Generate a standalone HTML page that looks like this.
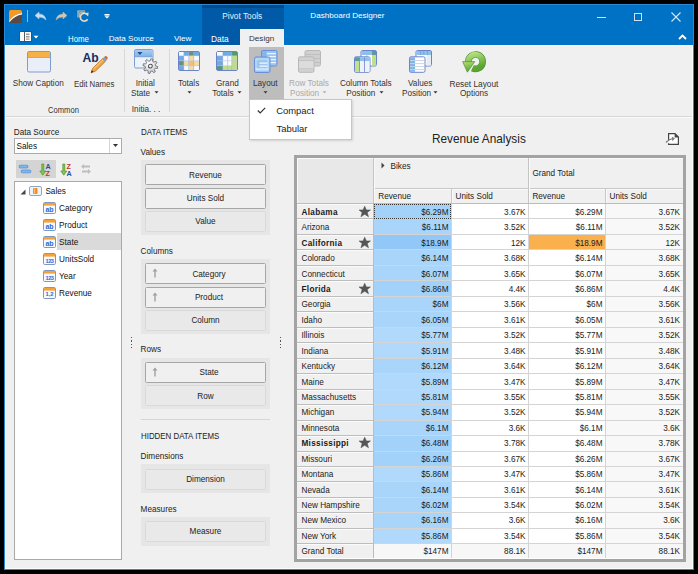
<!DOCTYPE html><html><head><meta charset="utf-8"><style>
html,body{margin:0;padding:0;width:698px;height:574px;overflow:hidden;background:#000;}
body{position:relative;font-family:"Liberation Sans",sans-serif;}
.t{position:absolute;white-space:nowrap;}
</style></head><body>
<div style="position:absolute;left:4px;top:4px;width:690px;height:566px;background:#0072c6;"></div>
<div style="position:absolute;left:4px;top:4px;width:690px;height:1px;background:#2a8ad8;"></div>
<div style="position:absolute;left:4px;top:4px;width:1px;height:566px;background:#2a8ad8;"></div>
<div style="position:absolute;left:693px;top:4px;width:1px;height:566px;background:#2a8ad8;"></div>
<div style="position:absolute;left:4px;top:569px;width:690px;height:1px;background:#2a8ad8;"></div>
<div style="position:absolute;left:202px;top:5px;width:82px;height:40px;background:#005aa8;"></div>
<div style="position:absolute;left:202px;top:5px;width:82px;height:3px;background:#004a8a;"></div>
<div style="position:absolute;left:5px;top:45px;width:688px;height:524px;background:#f0f0f0;"></div>
<div style="position:absolute;left:5px;top:45px;width:688px;height:1px;background:#fcfcfc;"></div>
<div style="position:absolute;left:5px;top:45px;width:1px;height:524px;background:#fcfcfc;"></div>
<div style="position:absolute;left:692px;top:45px;width:1px;height:524px;background:#fcfcfc;"></div>
<div style="position:absolute;left:5px;top:568px;width:688px;height:1px;background:#fcfcfc;"></div>
<div style="position:absolute;left:6px;top:116px;width:686px;height:1px;background:#d8d8d8;"></div>
<div style="position:absolute;left:6px;top:117px;width:686px;height:1px;background:#fafafa;"></div>
<div style="position:absolute;left:240px;top:29px;width:44px;height:17px;background:#f0f0f0;"></div>
<div class="t" style="top:10.12px;font-size:8.3px;line-height:12px;color:#e8f0f8;left:222.3px;">Pivot Tools</div>
<div class="t" style="top:10.19px;font-size:8.1px;line-height:12px;color:#ffffff;left:310.3px;">Dashboard Designer</div>
<div class="t" style="top:33.32px;font-size:8.3px;line-height:12px;color:#ffffff;left:67.7px;transform:scaleX(0.94);transform-origin:0 0;">Home</div>
<div class="t" style="top:33.39px;font-size:8.1px;line-height:12px;color:#ffffff;left:108.7px;">Data Source</div>
<div class="t" style="top:33.39px;font-size:8.1px;line-height:12px;color:#ffffff;left:174px;">View</div>
<div class="t" style="top:33.29px;font-size:8.4px;line-height:12px;color:#ffffff;left:211px;">Data</div>
<div class="t" style="top:33.39px;font-size:8.1px;line-height:12px;color:#333;left:249px;">Design</div>
<div class="t" style="top:78.36px;font-size:8.2px;line-height:12px;color:#333;left:12.8px;">Show Caption</div>
<div class="t" style="top:78.32px;font-size:8.3px;line-height:12px;color:#333;left:74.2px;transform:scaleX(0.94);transform-origin:0 0;">Edit Names</div>
<div class="t" style="top:104.32px;font-size:8.3px;line-height:12px;color:#333;left:47.9px;transform:scaleX(0.92);transform-origin:0 0;">Common</div>
<div class="t" style="top:78.36px;font-size:8.2px;line-height:12px;color:#333;left:135.7px;">Initial</div>
<div class="t" style="top:88.36px;font-size:8.2px;line-height:12px;color:#333;left:131px;">State</div>
<div class="t" style="top:104.36px;font-size:8.2px;line-height:12px;color:#333;left:131.8px;">Initia<span style="letter-spacing:2.2px">...</span></div>
<div class="t" style="top:78.36px;font-size:8.2px;line-height:12px;color:#333;left:177.9px;">Totals</div>
<div class="t" style="top:78.36px;font-size:8.2px;line-height:12px;color:#333;left:216px;">Grand</div>
<div class="t" style="top:88.36px;font-size:8.2px;line-height:12px;color:#333;left:212.2px;">Totals</div>
<div style="position:absolute;left:249px;top:47px;width:35px;height:53px;background:#bdbdbd;"></div>
<div class="t" style="top:78.36px;font-size:8.2px;line-height:12px;color:#333;left:253px;">Layout</div>
<div class="t" style="top:78.36px;font-size:8.2px;line-height:12px;color:#a8a8a8;left:289px;">Row Totals</div>
<div class="t" style="top:88.36px;font-size:8.2px;line-height:12px;color:#a8a8a8;left:290px;">Position</div>
<div class="t" style="top:78.36px;font-size:8.2px;line-height:12px;color:#333;left:339.9px;">Column Totals</div>
<div class="t" style="top:88.36px;font-size:8.2px;line-height:12px;color:#333;left:346.3px;">Position</div>
<div class="t" style="top:78.36px;font-size:8.2px;line-height:12px;color:#333;left:408px;">Values</div>
<div class="t" style="top:88.36px;font-size:8.2px;line-height:12px;color:#333;left:402px;">Position</div>
<div class="t" style="top:78.32px;font-size:8.3px;line-height:12px;color:#333;left:449.5px;">Reset Layout</div>
<div class="t" style="top:88.36px;font-size:8.2px;line-height:12px;color:#333;left:460px;">Options</div>
<div style="position:absolute;left:124px;top:49px;width:1px;height:63px;background:#d8d8d8;"></div>
<div style="position:absolute;left:169px;top:49px;width:1px;height:63px;background:#d8d8d8;"></div>
<svg style="position:absolute;left:9px;top:10px" width="13" height="13" viewBox="0 0 13 13"><defs><clipPath id="ac"><rect x="0" y="0" width="13" height="13" rx="2"/></clipPath></defs><g clip-path="url(#ac)"><rect width="13" height="13" fill="#5a4a44"/><path d="M0 0H13V3Q5 4 0 11Z" fill="#f39a22"/><path d="M0 11Q5 4 13 3V4.6Q6 5.5 0 12.6Z" fill="#fff"/></g></svg>
<div style="position:absolute;left:27px;top:10px;width:1px;height:12px;background:#8fbbe6;"></div>
<svg style="position:absolute;left:34px;top:11px" width="13" height="10" viewBox="0 0 13 10"><path d="M1 4.5L5 1V3Q11 3 12 9Q9.5 6 5 6V8Z" fill="#c8e0f6" stroke="#a9cdee" stroke-width="0.6"/></svg>
<svg style="position:absolute;left:55px;top:11px" width="13" height="10" viewBox="0 0 13 10"><path d="M12 4.5L8 1V3Q2 3 1 9Q3.5 6 8 6V8Z" fill="#d6c6ae" stroke="#bfae95" stroke-width="0.6"/></svg>
<svg style="position:absolute;left:76px;top:9px" width="15" height="14" viewBox="0 0 15 14"><path d="M2 8.5V2H9" fill="none" stroke="#e0ccb0" stroke-width="1.1"/><path d="M3.8 8.5V3.8H9" fill="none" stroke="#e0ccb0" stroke-width="1.1"/><path d="M11.6 10.2A3.9 3.9 0 1 1 10.8 5.2" fill="none" stroke="#ead8c0" stroke-width="1.7"/><path d="M8.6 4.2L12.6 3.4L12.2 7.6Z" fill="#ead8c0"/></svg>
<svg style="position:absolute;left:104px;top:13px" width="6" height="6" viewBox="0 0 6 6"><rect x="0.5" y="1" width="5" height="1.6" fill="#fff"/><path d="M0.5 3.2H5.5L3 5.6Z" fill="#fff"/></svg>
<svg style="position:absolute;left:19px;top:31px" width="21" height="11" viewBox="0 0 21 11"><rect x="0.5" y="0.5" width="12" height="10" rx="0.8" fill="#05325e" opacity="0.5"/><rect x="1" y="1" width="11" height="9" rx="0.5" fill="#fbfbfb"/><rect x="5" y="1" width="0.9" height="9" fill="#4a4a4a"/><rect x="7" y="2.5" width="3.5" height="1.5" fill="#9a9a9a"/><rect x="7" y="5" width="3.5" height="1.5" fill="#9a9a9a"/><rect x="7" y="7.5" width="3.5" height="1.2" fill="#9a9a9a"/><path d="M14.5 4.8H19.5L17 7.6Z" fill="#fff"/></svg>
<div style="position:absolute;left:597px;top:17px;width:9px;height:1px;background:#cfe2f4;"></div>
<div style="position:absolute;left:634px;top:13px;width:8px;height:8px;border:1px solid #cfe2f4;box-sizing:border-box;"></div>
<svg style="position:absolute;left:671px;top:12px" width="10" height="10" viewBox="0 0 10 10"><path d="M0.5 0.5L9.5 9.5M9.5 0.5L0.5 9.5" stroke="#d7e6f5" stroke-width="1.1"/></svg>
<svg style="position:absolute;left:678px;top:33px" width="9" height="7" viewBox="0 0 9 7"><path d="M1 6L4.5 2.5L8 6" fill="none" stroke="#fff" stroke-width="1.8"/></svg>
<svg style="position:absolute;left:27px;top:51px" width="24" height="22" viewBox="0 0 24 22"><rect x="0.5" y="0.5" width="23" height="20.5" rx="1.5" fill="#e9eef8" stroke="#7f9cd2"/><rect x="1" y="1" width="22" height="5" fill="#f5b048"/><rect x="1" y="6" width="22" height="1" fill="#e8a040"/></svg>
<svg style="position:absolute;left:82px;top:51px" width="26" height="23" viewBox="0 0 26 23"><text x="0.6" y="11.4" transform="scale(0.92,1)" font-family="Liberation Sans" font-weight="bold" font-size="13.2" fill="#1a2c5c">Ab</text><path d="M9 21.8L10.8 17.2L20.6 7.6L23.4 10.4L13.6 20Z" fill="#f4a53a" stroke="#b8621c" stroke-width="0.7"/><path d="M11.6 18L21 8.8" stroke="#fcd590" stroke-width="1"/><path d="M20.6 7.6L22 6.2L24.8 9L23.4 10.4Z" fill="#6aa8e0"/><path d="M22 6.2L23 5.2Q23.8 4.6 24.6 5.3L25.5 6.2Q26.1 7 25.4 7.7L24.8 9Z" fill="#d8683a"/><path d="M9 21.8L9.9 19.3L11.5 20.9Z" fill="#222"/></svg>
<svg style="position:absolute;left:133px;top:48px" width="28" height="28" viewBox="0 0 28 28"><rect x="1.5" y="1.5" width="18.5" height="18.5" rx="1.5" fill="#eef3fb" stroke="#7d9dd4"/><defs><linearGradient id="isg" x1="0" y1="0" x2="0" y2="1"><stop offset="0" stop-color="#a9cdf0"/><stop offset="1" stop-color="#7fb0e6"/></linearGradient><radialGradient id="gg" cx="0.4" cy="0.35" r="0.7"><stop offset="0" stop-color="#ffffff"/><stop offset="1" stop-color="#c4c8cc"/></radialGradient></defs><rect x="2" y="2" width="17.5" height="6.8" fill="url(#isg)"/><rect x="2" y="8.4" width="17.5" height="0.8" fill="#6e9ad8"/><path d="M4.3 4H9.5L6.9 7Z" fill="#1d4f9a"/><g transform="translate(17.4,18.1) rotate(11)"><path d="M5.06 -1.21 L7.33 -0.99 L7.33 0.99 L5.06 1.21 L4.43 2.72 L5.88 4.49 L4.49 5.88 L2.72 4.43 L1.21 5.06 L0.99 7.33 L-0.99 7.33 L-1.21 5.06 L-2.72 4.43 L-4.49 5.88 L-5.88 4.49 L-4.43 2.72 L-5.06 1.21 L-7.33 0.99 L-7.33 -0.99 L-5.06 -1.21 L-4.43 -2.72 L-5.88 -4.49 L-4.49 -5.88 L-2.72 -4.43 L-1.21 -5.06 L-0.99 -7.33 L0.99 -7.33 L1.21 -5.06 L2.72 -4.43 L4.49 -5.88 L5.88 -4.49 L4.43 -2.72Z" fill="url(#gg)" stroke="#6a6e74" stroke-width="0.8" stroke-linejoin="round"/><circle r="1.9" fill="#f4f4f4" stroke="#555" stroke-width="1"/></g></svg>
<svg style="position:absolute;left:178px;top:51px" width="22" height="20" viewBox="0 0 22 20"><rect x="0.5" y="0.5" width="21" height="19" rx="1.5" fill="#fff" stroke="#6b84c9"/><rect x="1" y="1" width="5" height="4" fill="#f8fbff"/><rect x="6" y="1" width="5" height="4" fill="#6fa9e2"/><rect x="11" y="1" width="5" height="4" fill="#6d907c"/><rect x="16" y="1" width="5" height="4" fill="#6fa9e2"/><rect x="1" y="5" width="5" height="5" fill="#6fa9e2"/><rect x="6" y="5" width="5" height="5" fill="#f8fbff"/><rect x="11" y="5" width="5" height="5" fill="#f6dba0"/><rect x="16" y="5" width="5" height="5" fill="#f8fbff"/><rect x="1" y="10" width="5" height="5" fill="#6d907c"/><rect x="6" y="10" width="5" height="5" fill="#f6dba0"/><rect x="11" y="10" width="5" height="5" fill="#f1c172"/><rect x="16" y="10" width="5" height="5" fill="#f6dba0"/><rect x="1" y="15" width="5" height="4" fill="#6fa9e2"/><rect x="6" y="15" width="5" height="4" fill="#f8fbff"/><rect x="11" y="15" width="5" height="4" fill="#f6dba0"/><rect x="16" y="15" width="5" height="4" fill="#f8fbff"/><rect x="5.5" y="1" width="0.6" height="18" fill="#9fb1dc"/><rect x="10.5" y="1" width="0.6" height="18" fill="#9fb1dc"/><rect x="15.5" y="1" width="0.6" height="18" fill="#9fb1dc"/><rect x="1" y="4.5" width="20" height="0.6" fill="#b9c6e6"/><rect x="1" y="9.5" width="20" height="0.6" fill="#b9c6e6"/><rect x="1" y="14.5" width="20" height="0.6" fill="#b9c6e6"/></svg>
<svg style="position:absolute;left:216px;top:51px" width="22" height="20" viewBox="0 0 22 20"><rect x="0.5" y="0.5" width="21" height="19" rx="1.5" fill="#fff" stroke="#6b84c9"/><rect x="1" y="1" width="6" height="4" fill="#f8fbff"/><rect x="7" y="1" width="5" height="4" fill="#6fa9e2"/><rect x="12" y="1" width="4" height="4" fill="#6fa9e2"/><rect x="16" y="1" width="5" height="4" fill="#4f9a72"/><rect x="1" y="5" width="6" height="5" fill="#6fa9e2"/><rect x="7" y="5" width="5" height="5" fill="#f8fbff"/><rect x="12" y="5" width="4" height="5" fill="#f8fbff"/><rect x="16" y="5" width="5" height="5" fill="#bfdd8c"/><rect x="1" y="10" width="6" height="5" fill="#6fa9e2"/><rect x="7" y="10" width="5" height="5" fill="#f8fbff"/><rect x="12" y="10" width="4" height="5" fill="#f8fbff"/><rect x="16" y="10" width="5" height="5" fill="#bfdd8c"/><rect x="1" y="15" width="6" height="4" fill="#4f9a72"/><rect x="7" y="15" width="5" height="4" fill="#bfdd8c"/><rect x="12" y="15" width="4" height="4" fill="#bfdd8c"/><rect x="16" y="15" width="5" height="4" fill="#bfdd8c"/><rect x="6.5" y="1" width="0.6" height="18" fill="#9fb1dc"/><rect x="11.5" y="1" width="0.6" height="18" fill="#9fb1dc"/><rect x="15.5" y="1" width="0.6" height="18" fill="#9fb1dc"/><rect x="1" y="4.5" width="20" height="0.6" fill="#b9c6e6"/><rect x="1" y="9.5" width="20" height="0.6" fill="#b9c6e6"/><rect x="1" y="14.5" width="20" height="0.6" fill="#b9c6e6"/></svg>
<svg style="position:absolute;left:254px;top:50px" width="24" height="24" viewBox="0 0 24 24"><g transform="translate(7,0)"><rect x="0.5" y="0.5" width="15.5" height="15.5" rx="1.5" fill="#9cc6f0" stroke="#6b8fd6"/><rect x="1" y="1" width="4.5" height="14.5" fill="#86b5ea"/><rect x="6" y="3" width="9" height="1.2" fill="#eaf4ff"/><rect x="6" y="6" width="9" height="1.2" fill="#eaf4ff"/><rect x="6" y="9" width="9" height="1.2" fill="#eaf4ff"/><rect x="6" y="12" width="9" height="1.2" fill="#eaf4ff"/></g><g transform="translate(0,6.5)"><rect x="0.5" y="0.5" width="15.5" height="15.5" rx="1.5" fill="#9cc6f0" stroke="#6b8fd6"/><rect x="2" y="2.5" width="12" height="11" fill="none" stroke="#d8eaff" stroke-width="0.8"/><rect x="5.5" y="6" width="8" height="1.3" fill="#eaf6ff"/><rect x="5.5" y="9" width="8" height="1.3" fill="#eaf6ff"/><rect x="2" y="12" width="12" height="1" fill="#eaf6ff"/></g></svg>
<svg style="position:absolute;left:294px;top:50px" width="28" height="24" viewBox="0 0 28 24"><g transform="translate(10.5,0)"><rect x="0.5" y="0.5" width="15.5" height="15.5" rx="1.5" fill="#d0d0d0" stroke="#b8b8b8"/><rect x="1" y="4" width="14.5" height="0.8" fill="#bcbcbc"/><rect x="1" y="8" width="14.5" height="0.8" fill="#bcbcbc"/><rect x="1" y="12" width="14.5" height="0.8" fill="#bcbcbc"/></g><g transform="translate(4,6.3)"><rect x="0.5" y="0.5" width="15.5" height="15.5" rx="1.5" fill="#d2d2d2" stroke="#b8b8b8"/><rect x="1" y="4" width="14.5" height="0.8" fill="#bcbcbc"/><rect x="1" y="8" width="14.5" height="0.8" fill="#bcbcbc"/><rect x="1" y="12" width="14.5" height="0.8" fill="#bcbcbc"/><rect x="1" y="4.8" width="14.5" height="7.2" fill="#dcdcdc"/></g></svg>
<svg style="position:absolute;left:350px;top:50px" width="28" height="24" viewBox="0 0 28 24"><g transform="translate(10.5,0)"><rect x="0.5" y="0.5" width="15.5" height="15.5" rx="1.5" fill="#ffffff" stroke="#6b84c9"/><rect x="1" y="1" width="14.5" height="4" fill="#8fc0ec"/><rect x="11.5" y="1" width="4" height="4" fill="#5d9a98"/><rect x="11.5" y="5" width="4" height="10.5" fill="#bfe08c"/><rect x="6" y="1" width="0.8" height="14" fill="#9fb6de"/></g><g transform="translate(4,6.3)"><rect x="0.5" y="0.5" width="15.5" height="15.5" rx="1.5" fill="#ffffff" stroke="#6b84c9"/><rect x="1" y="1" width="14.5" height="4" fill="#8fc0ec"/><rect x="1" y="1" width="4" height="4" fill="#5d9a98"/><rect x="1" y="5" width="4" height="10.5" fill="#bfe08c"/><rect x="5" y="5" width="10.5" height="10.5" fill="#eef2fb"/><rect x="10" y="1" width="0.8" height="14.5" fill="#6b84c9"/><rect x="5" y="1" width="0.8" height="14.5" fill="#6b84c9"/></g></svg>
<svg style="position:absolute;left:405px;top:50px" width="28" height="24" viewBox="0 0 28 24"><g transform="translate(10.5,0)"><rect x="0.5" y="0.5" width="15.5" height="15.5" rx="1.5" fill="#ffffff" stroke="#6b84c9"/><rect x="1" y="1" width="14.5" height="4" fill="#8fc0ec"/><rect x="11" y="5" width="4.5" height="10.5" fill="#e6ecf6"/><rect x="4.5" y="1" width="0.7" height="4" fill="#6d9bd6"/><rect x="8" y="1" width="0.7" height="4" fill="#6d9bd6"/><rect x="11.5" y="1" width="0.7" height="4" fill="#6d9bd6"/></g><g transform="translate(4,6.3)"><rect x="0.5" y="0.5" width="15.5" height="15.5" rx="1.5" fill="#ffffff" stroke="#6b84c9"/><rect x="1" y="1" width="5" height="14.5" fill="#7fb4e8"/><rect x="1" y="3.8" width="14.5" height="1" fill="#c8d4e6"/><rect x="1" y="6.8" width="14.5" height="1" fill="#c8d4e6"/><rect x="1" y="9.8" width="14.5" height="1" fill="#c8d4e6"/><rect x="1" y="12.8" width="14.5" height="1" fill="#c8d4e6"/></g></svg>
<svg style="position:absolute;left:461px;top:49px" width="27" height="25" viewBox="0 0 27 25"><defs><linearGradient id="rg" x1="0" y1="0" x2="0.3" y2="1"><stop offset="0" stop-color="#b4e07c"/><stop offset="1" stop-color="#5aa530"/></linearGradient></defs><path d="M7.3 12.7A7.2 7.2 0 1 1 11.46 19.23" fill="none" stroke="#4f9030" stroke-width="6.6"/><path d="M7.3 12.7A7.2 7.2 0 1 1 11.46 19.23" fill="none" stroke="url(#rg)" stroke-width="5.4"/><path d="M1.6 12.6H13.8L6.4 23.2Z" fill="url(#rg)" stroke="#4f9030" stroke-width="0.7" stroke-linejoin="round"/></svg>
<svg style="position:absolute;left:154.3px;top:90.8px" width="5" height="3" viewBox="0 0 5 3"><path d="M0.5 0.3H4.5L2.5 2.6Z" fill="#333"/></svg>
<svg style="position:absolute;left:186.8px;top:90.8px" width="5" height="3" viewBox="0 0 5 3"><path d="M0.5 0.3H4.5L2.5 2.6Z" fill="#333"/></svg>
<svg style="position:absolute;left:236.5px;top:90.8px" width="5" height="3" viewBox="0 0 5 3"><path d="M0.5 0.3H4.5L2.5 2.6Z" fill="#333"/></svg>
<svg style="position:absolute;left:262.9px;top:90.8px" width="5" height="3" viewBox="0 0 5 3"><path d="M0.5 0.3H4.5L2.5 2.6Z" fill="#333"/></svg>
<svg style="position:absolute;left:322.0px;top:90.8px" width="5" height="3" viewBox="0 0 5 3"><path d="M0.5 0.3H4.5L2.5 2.6Z" fill="#b0b0b0"/></svg>
<svg style="position:absolute;left:378.5px;top:90.8px" width="5" height="3" viewBox="0 0 5 3"><path d="M0.5 0.3H4.5L2.5 2.6Z" fill="#333"/></svg>
<svg style="position:absolute;left:432.7px;top:90.8px" width="5" height="3" viewBox="0 0 5 3"><path d="M0.5 0.3H4.5L2.5 2.6Z" fill="#333"/></svg>
<div class="t" style="top:126.86px;font-size:8.2px;line-height:12px;color:#222;left:13.8px;">Data Source</div>
<div style="position:absolute;left:14px;top:138px;width:108px;height:16px;background:#fff;border:1px solid #ababab;box-sizing:border-box;"></div>
<div style="position:absolute;left:109px;top:139px;width:1px;height:14px;background:#d4d4d4;"></div>
<svg style="position:absolute;left:112.5px;top:144px" width="5" height="3" viewBox="0 0 5 3"><path d="M0 0H5L2.5 3Z" fill="#333"/></svg>
<div class="t" style="top:140.96px;font-size:8.2px;line-height:12px;color:#111;left:16.5px;">Sales</div>
<div style="position:absolute;left:16px;top:160px;width:40px;height:18px;background:#d4d4d4;"></div>
<svg style="position:absolute;left:18px;top:163px" width="15" height="12" viewBox="0 0 15 12"><rect x="1.2" y="2.2" width="8.8" height="2.8" rx="1" fill="#7db8ee" stroke="#3f7fcf" stroke-width="0.6"/><rect x="3.2" y="7" width="9.6" height="2.8" rx="1" fill="#7db8ee" stroke="#3f7fcf" stroke-width="0.6"/></svg>
<svg style="position:absolute;left:39px;top:163px" width="14" height="13" viewBox="0 0 14 13"><path d="M2.8 1H4.8V8H6.8L3.8 12.2L0.8 8H2.8Z" fill="#80c848" stroke="#3f8a22" stroke-width="0.6"/><text x="6.6" y="6.1" font-family="Liberation Sans" font-weight="bold" font-size="7.2" fill="#2a4e9e">A</text><text x="6.6" y="12.6" font-family="Liberation Sans" font-weight="bold" font-size="7.2" fill="#c0381e">Z</text></svg>
<svg style="position:absolute;left:59.5px;top:163px" width="14" height="13" viewBox="0 0 14 13"><path d="M2.8 1H4.8V8H6.8L3.8 12.2L0.8 8H2.8Z" fill="#80c848" stroke="#3f8a22" stroke-width="0.6"/><text x="6.6" y="6.1" font-family="Liberation Sans" font-weight="bold" font-size="7.2" fill="#c0381e">Z</text><text x="6.6" y="12.6" font-family="Liberation Sans" font-weight="bold" font-size="7.2" fill="#2a4e9e">A</text></svg>
<svg style="position:absolute;left:80px;top:163px" width="12" height="12" viewBox="0 0 12 12"><path d="M1 3.5L4 1V2.6H10V4.4H4V6Z" fill="#bdbdbd"/><path d="M11 8.5L8 6V7.6H2V9.4H8V11Z" fill="#bdbdbd"/></svg>
<div style="position:absolute;left:14px;top:181px;width:108px;height:379px;background:#fff;border:1px solid #a9a9a9;box-sizing:border-box;"></div>
<div style="position:absolute;left:57px;top:233px;width:64px;height:17px;background:#dadada;"></div>
<svg style="position:absolute;left:20px;top:189px" width="6" height="6" viewBox="0 0 6 6"><path d="M5.5 0.5V5.5H0.5Z" fill="#444"/></svg>
<svg style="position:absolute;left:29px;top:186px" width="13" height="10" viewBox="0 0 13 10"><rect x="0.5" y="0.5" width="12" height="9" rx="1.5" fill="#eef3f9" stroke="#8fa7c4"/><rect x="4" y="2" width="4.5" height="6" rx="1" fill="#f08a1c"/><rect x="5" y="2.5" width="1.2" height="5" fill="#f9c27a"/></svg>
<svg style="position:absolute;left:43px;top:202.3px" width="13" height="12" viewBox="0 0 13 12"><rect x="0.5" y="0.5" width="12" height="11" rx="1.2" fill="#f6f9fd" stroke="#7e98c2"/><rect x="1" y="1" width="11" height="2.6" fill="#f3a23a"/><text x="6.5" y="10" text-anchor="middle" font-family="Liberation Sans" font-weight="bold" font-size="7" fill="#2a6ad0">ab</text></svg>
<div class="t" style="top:203.16px;font-size:8.2px;line-height:12px;color:#111;left:59.1px;">Category</div>
<svg style="position:absolute;left:43px;top:219.3px" width="13" height="12" viewBox="0 0 13 12"><rect x="0.5" y="0.5" width="12" height="11" rx="1.2" fill="#f6f9fd" stroke="#7e98c2"/><rect x="1" y="1" width="11" height="2.6" fill="#f3a23a"/><text x="6.5" y="10" text-anchor="middle" font-family="Liberation Sans" font-weight="bold" font-size="7" fill="#2a6ad0">ab</text></svg>
<div class="t" style="top:220.16px;font-size:8.2px;line-height:12px;color:#111;left:59.1px;">Product</div>
<svg style="position:absolute;left:43px;top:236.3px" width="13" height="12" viewBox="0 0 13 12"><rect x="0.5" y="0.5" width="12" height="11" rx="1.2" fill="#f6f9fd" stroke="#7e98c2"/><rect x="1" y="1" width="11" height="2.6" fill="#f3a23a"/><text x="6.5" y="10" text-anchor="middle" font-family="Liberation Sans" font-weight="bold" font-size="7" fill="#2a6ad0">ab</text></svg>
<div class="t" style="top:237.16px;font-size:8.2px;line-height:12px;color:#111;left:59.1px;">State</div>
<svg style="position:absolute;left:43px;top:253.3px" width="13" height="12" viewBox="0 0 13 12"><rect x="0.5" y="0.5" width="12" height="11" rx="1.2" fill="#f6f9fd" stroke="#7e98c2"/><rect x="1" y="1" width="11" height="2.6" fill="#f3a23a"/><text x="6.5" y="9.8" text-anchor="middle" font-family="Liberation Sans" font-weight="bold" font-size="5.6" fill="#2a6ad0" letter-spacing="-0.4">123</text></svg>
<div class="t" style="top:254.16px;font-size:8.2px;line-height:12px;color:#111;left:59.1px;">UnitsSold</div>
<svg style="position:absolute;left:43px;top:270.3px" width="13" height="12" viewBox="0 0 13 12"><rect x="0.5" y="0.5" width="12" height="11" rx="1.2" fill="#f6f9fd" stroke="#7e98c2"/><rect x="1" y="1" width="11" height="2.6" fill="#f3a23a"/><text x="6.5" y="9.8" text-anchor="middle" font-family="Liberation Sans" font-weight="bold" font-size="5.6" fill="#2a6ad0" letter-spacing="-0.4">123</text></svg>
<div class="t" style="top:271.16px;font-size:8.2px;line-height:12px;color:#111;left:59.1px;">Year</div>
<svg style="position:absolute;left:43px;top:287.3px" width="13" height="12" viewBox="0 0 13 12"><rect x="0.5" y="0.5" width="12" height="11" rx="1.2" fill="#f6f9fd" stroke="#7e98c2"/><rect x="1" y="1" width="11" height="2.6" fill="#f3a23a"/><text x="6.5" y="9.3" text-anchor="middle" font-family="Liberation Sans" font-size="5.8" font-weight="bold" fill="#2a6ad0">1,2</text></svg>
<div class="t" style="top:288.16px;font-size:8.2px;line-height:12px;color:#111;left:59.1px;">Revenue</div>
<div class="t" style="top:186.16px;font-size:8.2px;line-height:12px;color:#111;left:45.4px;">Sales</div>
<div class="t" style="top:125.81px;font-size:9.2px;line-height:12px;color:#222;left:140.6px;transform:scaleX(0.87);transform-origin:0 0;">DATA ITEMS</div>
<div class="t" style="top:147.06px;font-size:8.2px;line-height:12px;color:#222;left:140.6px;">Values</div>
<div style="position:absolute;left:141px;top:160px;width:129px;height:75px;background:#e6e6e6;"></div>
<div style="position:absolute;left:145px;top:164px;width:121px;height:21px;background:#f0f0f0;border:1px solid #a6a6a6;border-radius:1.5px;box-sizing:border-box;"></div>
<div class="t" style="top:169.66px;font-size:8.2px;line-height:12px;color:#222;left:105.5px;width:200px;text-align:center;">Revenue</div>
<div style="position:absolute;left:145px;top:187.5px;width:121px;height:21px;background:#f0f0f0;border:1px solid #a6a6a6;border-radius:1.5px;box-sizing:border-box;"></div>
<div class="t" style="top:193.16px;font-size:8.2px;line-height:12px;color:#222;left:105.5px;width:200px;text-align:center;">Units Sold</div>
<div style="position:absolute;left:145px;top:210.5px;width:121px;height:21px;background:#e9e9e9;border:1px solid #d9d9d9;border-radius:1.5px;box-sizing:border-box;"></div>
<div class="t" style="top:216.16px;font-size:8.2px;line-height:12px;color:#222;left:105.5px;width:200px;text-align:center;">Value</div>
<div class="t" style="top:246.36px;font-size:8.2px;line-height:12px;color:#222;left:140.6px;">Columns</div>
<div style="position:absolute;left:141px;top:259px;width:129px;height:75px;background:#e6e6e6;"></div>
<div style="position:absolute;left:145px;top:263px;width:121px;height:21px;background:#f0f0f0;border:1px solid #a6a6a6;border-radius:1.5px;box-sizing:border-box;"></div>
<div class="t" style="top:268.66px;font-size:8.2px;line-height:12px;color:#222;left:109px;width:200px;text-align:center;">Category</div>
<svg style="position:absolute;left:151.5px;top:268px" width="6" height="10" viewBox="0 0 6 10"><path d="M3 0.5L5.5 3.5H3.7V9.5H2.3V3.5H0.5Z" fill="#a0a0a0"/></svg>
<div style="position:absolute;left:145px;top:286.5px;width:121px;height:21px;background:#f0f0f0;border:1px solid #a6a6a6;border-radius:1.5px;box-sizing:border-box;"></div>
<div class="t" style="top:292.16px;font-size:8.2px;line-height:12px;color:#222;left:109px;width:200px;text-align:center;">Product</div>
<svg style="position:absolute;left:151.5px;top:291.5px" width="6" height="10" viewBox="0 0 6 10"><path d="M3 0.5L5.5 3.5H3.7V9.5H2.3V3.5H0.5Z" fill="#a0a0a0"/></svg>
<div style="position:absolute;left:145px;top:309.5px;width:121px;height:21px;background:#e9e9e9;border:1px solid #d9d9d9;border-radius:1.5px;box-sizing:border-box;"></div>
<div class="t" style="top:315.16px;font-size:8.2px;line-height:12px;color:#222;left:105.5px;width:200px;text-align:center;">Column</div>
<div class="t" style="top:344.16px;font-size:8.2px;line-height:12px;color:#222;left:140.6px;">Rows</div>
<div style="position:absolute;left:141px;top:358px;width:129px;height:51px;background:#e6e6e6;"></div>
<div style="position:absolute;left:145px;top:361.5px;width:121px;height:21px;background:#f0f0f0;border:1px solid #a6a6a6;border-radius:1.5px;box-sizing:border-box;"></div>
<div class="t" style="top:367.16px;font-size:8.2px;line-height:12px;color:#222;left:109px;width:200px;text-align:center;">State</div>
<svg style="position:absolute;left:151.5px;top:366.5px" width="6" height="10" viewBox="0 0 6 10"><path d="M3 0.5L5.5 3.5H3.7V9.5H2.3V3.5H0.5Z" fill="#a0a0a0"/></svg>
<div style="position:absolute;left:145px;top:385px;width:121px;height:21px;background:#e9e9e9;border:1px solid #d9d9d9;border-radius:1.5px;box-sizing:border-box;"></div>
<div class="t" style="top:390.66px;font-size:8.2px;line-height:12px;color:#222;left:105.5px;width:200px;text-align:center;">Row</div>
<div style="position:absolute;left:141px;top:419px;width:129px;height:1px;background:#d6d6d6;"></div>
<div class="t" style="top:429.81px;font-size:9.2px;line-height:12px;color:#222;left:140.6px;transform:scaleX(0.86);transform-origin:0 0;">HIDDEN DATA ITEMS</div>
<div class="t" style="top:450.96px;font-size:8.2px;line-height:12px;color:#222;left:140.6px;">Dimensions</div>
<div style="position:absolute;left:141px;top:464px;width:129px;height:29px;background:#e6e6e6;"></div>
<div style="position:absolute;left:145px;top:468.5px;width:121px;height:21px;background:#e9e9e9;border:1px solid #d9d9d9;border-radius:1.5px;box-sizing:border-box;"></div>
<div class="t" style="top:474.16px;font-size:8.2px;line-height:12px;color:#222;left:105.5px;width:200px;text-align:center;">Dimension</div>
<div class="t" style="top:504.36px;font-size:8.2px;line-height:12px;color:#222;left:140.6px;">Measures</div>
<div style="position:absolute;left:141px;top:517px;width:129px;height:29px;background:#e6e6e6;"></div>
<div style="position:absolute;left:145px;top:520.5px;width:121px;height:21px;background:#e9e9e9;border:1px solid #d9d9d9;border-radius:1.5px;box-sizing:border-box;"></div>
<div class="t" style="top:526.16px;font-size:8.2px;line-height:12px;color:#222;left:105.5px;width:200px;text-align:center;">Measure</div>
<div style="position:absolute;left:131px;top:337px;width:1.3px;height:1.3px;background:#555;"></div>
<div style="position:absolute;left:131px;top:340.3px;width:1.3px;height:1.3px;background:#555;"></div>
<div style="position:absolute;left:131px;top:343.6px;width:1.3px;height:1.3px;background:#555;"></div>
<div style="position:absolute;left:131px;top:346.9px;width:1.3px;height:1.3px;background:#555;"></div>
<div style="position:absolute;left:279.5px;top:337px;width:1.3px;height:1.3px;background:#555;"></div>
<div style="position:absolute;left:279.5px;top:340.3px;width:1.3px;height:1.3px;background:#555;"></div>
<div style="position:absolute;left:279.5px;top:343.6px;width:1.3px;height:1.3px;background:#555;"></div>
<div style="position:absolute;left:279.5px;top:346.9px;width:1.3px;height:1.3px;background:#555;"></div>
<div class="t" style="top:133.40px;font-size:12.7px;line-height:12px;color:#222;left:431.7px;transform:scaleX(0.93);transform-origin:0 0;">Revenue Analysis</div>
<svg style="position:absolute;left:664px;top:131px" width="18" height="16" viewBox="0 0 18 16"><path d="M4.6 9.8V2.6H11L14.4 6V13.4H4.6V12.2" fill="#fff" stroke="#444" stroke-width="1.2"/><path d="M10.6 2.2V6.4H14.8Z" fill="#444"/><path d="M2 11.5Q5 8 8.8 7.6" fill="none" stroke="#808080" stroke-width="1.3"/><path d="M7.8 5.6L11 7.6L8.3 10.2Z" fill="#808080"/></svg>
<div style="position:absolute;left:294px;top:155px;width:392px;height:407px;background:#fff;border:3px solid #a3a3a3;box-sizing:border-box;"></div>
<div style="position:absolute;left:297px;top:158px;width:76px;height:45px;background:#e8e8e8;border-top:1px solid #fafafa;border-left:1px solid #fafafa;box-sizing:border-box;"></div>
<div style="position:absolute;left:373px;top:158px;width:1px;height:45px;background:#c4c4c4;"></div>
<div style="position:absolute;left:374px;top:158px;width:309px;height:45px;background:#f0f0f0;"></div>
<div style="position:absolute;left:374px;top:158px;width:309px;height:1px;background:#fafafa;"></div>
<div style="position:absolute;left:374px;top:188px;width:309px;height:1px;background:#c8c8c8;"></div>
<div style="position:absolute;left:374px;top:189px;width:309px;height:1px;background:#fafafa;"></div>
<div style="position:absolute;left:297px;top:203px;width:386px;height:1px;background:#c8c8c8;"></div>
<div style="position:absolute;left:528px;top:158px;width:1px;height:45px;background:#c4c4c4;"></div>
<div style="position:absolute;left:374px;top:158px;width:1px;height:45px;background:#fafafa;"></div>
<div style="position:absolute;left:529px;top:158px;width:1px;height:45px;background:#fafafa;"></div>
<div style="position:absolute;left:451px;top:189px;width:1px;height:14px;background:#c8c8c8;"></div>
<div style="position:absolute;left:452px;top:189px;width:1px;height:14px;background:#fafafa;"></div>
<div style="position:absolute;left:605px;top:189px;width:1px;height:14px;background:#c8c8c8;"></div>
<div style="position:absolute;left:606px;top:189px;width:1px;height:14px;background:#fafafa;"></div>
<svg style="position:absolute;left:381px;top:162px" width="4" height="7" viewBox="0 0 4 7"><path d="M0.5 0.5L3.5 3.5L0.5 6.5Z" fill="#444"/></svg>
<div class="t" style="top:160.96px;font-size:8.2px;line-height:12px;color:#222;left:390.6px;">Bikes</div>
<div class="t" style="top:168.16px;font-size:8.2px;line-height:12px;color:#222;left:532.4px;">Grand Total</div>
<div class="t" style="top:190.96px;font-size:8.2px;line-height:12px;color:#222;left:378.3px;">Revenue</div>
<div class="t" style="top:190.96px;font-size:8.2px;line-height:12px;color:#222;left:455.5px;">Units Sold</div>
<div class="t" style="top:190.96px;font-size:8.2px;line-height:12px;color:#222;left:532.4px;">Revenue</div>
<div class="t" style="top:190.96px;font-size:8.2px;line-height:12px;color:#222;left:609.5px;">Units Sold</div>
<div style="position:absolute;left:297px;top:203px;width:76px;height:15px;background:#f0f0f0;"></div>
<div style="position:absolute;left:374px;top:203px;width:77px;height:15px;background:#a2d1fa;"></div>
<div style="position:absolute;left:606px;top:203px;width:77px;height:15px;background:#f8f8f8;"></div>
<div style="position:absolute;left:297px;top:218px;width:76px;height:16px;background:#f0f0f0;"></div>
<div style="position:absolute;left:374px;top:218px;width:77px;height:16px;background:#a9d5fb;"></div>
<div style="position:absolute;left:606px;top:218px;width:77px;height:16px;background:#f8f8f8;"></div>
<div style="position:absolute;left:297px;top:234px;width:76px;height:15px;background:#f0f0f0;"></div>
<div style="position:absolute;left:374px;top:234px;width:77px;height:15px;background:#92c8f7;"></div>
<div style="position:absolute;left:529px;top:234px;width:76px;height:15px;background:#fbb04e;"></div>
<div style="position:absolute;left:606px;top:234px;width:77px;height:15px;background:#f8f8f8;"></div>
<div style="position:absolute;left:297px;top:249px;width:76px;height:16px;background:#f0f0f0;"></div>
<div style="position:absolute;left:374px;top:249px;width:77px;height:16px;background:#a9d5fb;"></div>
<div style="position:absolute;left:606px;top:249px;width:77px;height:16px;background:#f8f8f8;"></div>
<div style="position:absolute;left:297px;top:265px;width:76px;height:15px;background:#f0f0f0;"></div>
<div style="position:absolute;left:374px;top:265px;width:77px;height:15px;background:#a9d5fb;"></div>
<div style="position:absolute;left:606px;top:265px;width:77px;height:15px;background:#f8f8f8;"></div>
<div style="position:absolute;left:297px;top:280px;width:76px;height:16px;background:#f0f0f0;"></div>
<div style="position:absolute;left:374px;top:280px;width:77px;height:16px;background:#a2d1fa;"></div>
<div style="position:absolute;left:606px;top:280px;width:77px;height:16px;background:#f8f8f8;"></div>
<div style="position:absolute;left:297px;top:296px;width:76px;height:15px;background:#f0f0f0;"></div>
<div style="position:absolute;left:374px;top:296px;width:77px;height:15px;background:#a9d5fb;"></div>
<div style="position:absolute;left:606px;top:296px;width:77px;height:15px;background:#f8f8f8;"></div>
<div style="position:absolute;left:297px;top:311px;width:76px;height:16px;background:#f0f0f0;"></div>
<div style="position:absolute;left:374px;top:311px;width:77px;height:16px;background:#a9d5fb;"></div>
<div style="position:absolute;left:606px;top:311px;width:77px;height:16px;background:#f8f8f8;"></div>
<div style="position:absolute;left:297px;top:327px;width:76px;height:15px;background:#f0f0f0;"></div>
<div style="position:absolute;left:374px;top:327px;width:77px;height:15px;background:#b1d9fc;"></div>
<div style="position:absolute;left:606px;top:327px;width:77px;height:15px;background:#f8f8f8;"></div>
<div style="position:absolute;left:297px;top:342px;width:76px;height:16px;background:#f0f0f0;"></div>
<div style="position:absolute;left:374px;top:342px;width:77px;height:16px;background:#b1d9fc;"></div>
<div style="position:absolute;left:606px;top:342px;width:77px;height:16px;background:#f8f8f8;"></div>
<div style="position:absolute;left:297px;top:358px;width:76px;height:15px;background:#f0f0f0;"></div>
<div style="position:absolute;left:374px;top:358px;width:77px;height:15px;background:#a9d5fb;"></div>
<div style="position:absolute;left:606px;top:358px;width:77px;height:15px;background:#f8f8f8;"></div>
<div style="position:absolute;left:297px;top:373px;width:76px;height:16px;background:#f0f0f0;"></div>
<div style="position:absolute;left:374px;top:373px;width:77px;height:16px;background:#b1d9fc;"></div>
<div style="position:absolute;left:606px;top:373px;width:77px;height:16px;background:#f8f8f8;"></div>
<div style="position:absolute;left:297px;top:389px;width:76px;height:15px;background:#f0f0f0;"></div>
<div style="position:absolute;left:374px;top:389px;width:77px;height:15px;background:#b1d9fc;"></div>
<div style="position:absolute;left:606px;top:389px;width:77px;height:15px;background:#f8f8f8;"></div>
<div style="position:absolute;left:297px;top:404px;width:76px;height:16px;background:#f0f0f0;"></div>
<div style="position:absolute;left:374px;top:404px;width:77px;height:16px;background:#b1d9fc;"></div>
<div style="position:absolute;left:606px;top:404px;width:77px;height:16px;background:#f8f8f8;"></div>
<div style="position:absolute;left:297px;top:420px;width:76px;height:15px;background:#f0f0f0;"></div>
<div style="position:absolute;left:374px;top:420px;width:77px;height:15px;background:#a9d5fb;"></div>
<div style="position:absolute;left:606px;top:420px;width:77px;height:15px;background:#f8f8f8;"></div>
<div style="position:absolute;left:297px;top:435px;width:76px;height:16px;background:#f0f0f0;"></div>
<div style="position:absolute;left:374px;top:435px;width:77px;height:16px;background:#a2d1fa;"></div>
<div style="position:absolute;left:606px;top:435px;width:77px;height:16px;background:#f8f8f8;"></div>
<div style="position:absolute;left:297px;top:451px;width:76px;height:15px;background:#f0f0f0;"></div>
<div style="position:absolute;left:374px;top:451px;width:77px;height:15px;background:#a2d1fa;"></div>
<div style="position:absolute;left:606px;top:451px;width:77px;height:15px;background:#f8f8f8;"></div>
<div style="position:absolute;left:297px;top:466px;width:76px;height:15px;background:#f0f0f0;"></div>
<div style="position:absolute;left:374px;top:466px;width:77px;height:15px;background:#b1d9fc;"></div>
<div style="position:absolute;left:606px;top:466px;width:77px;height:15px;background:#f8f8f8;"></div>
<div style="position:absolute;left:297px;top:481px;width:76px;height:16px;background:#f0f0f0;"></div>
<div style="position:absolute;left:374px;top:481px;width:77px;height:16px;background:#a9d5fb;"></div>
<div style="position:absolute;left:606px;top:481px;width:77px;height:16px;background:#f8f8f8;"></div>
<div style="position:absolute;left:297px;top:497px;width:76px;height:15px;background:#f0f0f0;"></div>
<div style="position:absolute;left:374px;top:497px;width:77px;height:15px;background:#a9d5fb;"></div>
<div style="position:absolute;left:606px;top:497px;width:77px;height:15px;background:#f8f8f8;"></div>
<div style="position:absolute;left:297px;top:512px;width:76px;height:16px;background:#f0f0f0;"></div>
<div style="position:absolute;left:374px;top:512px;width:77px;height:16px;background:#a9d5fb;"></div>
<div style="position:absolute;left:606px;top:512px;width:77px;height:16px;background:#f8f8f8;"></div>
<div style="position:absolute;left:297px;top:528px;width:76px;height:15px;background:#f0f0f0;"></div>
<div style="position:absolute;left:374px;top:528px;width:77px;height:15px;background:#b1d9fc;"></div>
<div style="position:absolute;left:606px;top:528px;width:77px;height:15px;background:#f8f8f8;"></div>
<div style="position:absolute;left:297px;top:543px;width:76px;height:15px;background:#f0f0f0;"></div>
<div style="position:absolute;left:606px;top:543px;width:77px;height:15px;background:#f8f8f8;"></div>
<div style="position:absolute;left:374px;top:543px;width:309px;height:15px;background:#f7f7f7;"></div>
<div style="position:absolute;left:297px;top:204px;width:76px;height:1px;background:#fbfbfb;"></div>
<div style="position:absolute;left:297px;top:218px;width:76px;height:1px;background:#bdbdbd;"></div>
<div style="position:absolute;left:374px;top:218px;width:309px;height:1px;background:#d4d4d4;"></div>
<div style="position:absolute;left:451px;top:203px;width:1px;height:16px;background:#d4d4d4;"></div>
<div style="position:absolute;left:528px;top:203px;width:1px;height:16px;background:#d4d4d4;"></div>
<div style="position:absolute;left:605px;top:203px;width:1px;height:16px;background:#d4d4d4;"></div>
<div class="t" style="top:206.96px;font-size:8.2px;line-height:12px;color:#1a1a1a;font-weight:bold;left:301.5px;letter-spacing:0.3px;">Alabama</div>
<svg style="position:absolute;left:359px;top:206px" width="12" height="12" viewBox="0 0 12 12"><path d="M5.7 0.2L7.4 3.9H11.5L8.3 6.5L9.5 10.8L5.7 8.3L1.9 10.8L3.1 6.5L-0.1 3.9H4Z" fill="#555" stroke="#555" stroke-width="0.5" stroke-linejoin="round"/></svg>
<div class="t" style="top:206.96px;font-size:8.2px;line-height:12px;color:#1a1a1a;right:249.5px;">$6.29M</div>
<div class="t" style="top:206.96px;font-size:8.2px;line-height:12px;color:#1a1a1a;right:172.5px;">3.67K</div>
<div class="t" style="top:206.96px;font-size:8.2px;line-height:12px;color:#1a1a1a;right:95.5px;">$6.29M</div>
<div class="t" style="top:206.96px;font-size:8.2px;line-height:12px;color:#1a1a1a;right:18px;">3.67K</div>
<div style="position:absolute;left:297px;top:219px;width:76px;height:1px;background:#fbfbfb;"></div>
<div style="position:absolute;left:297px;top:234px;width:76px;height:1px;background:#bdbdbd;"></div>
<div style="position:absolute;left:374px;top:234px;width:309px;height:1px;background:#d4d4d4;"></div>
<div style="position:absolute;left:451px;top:218px;width:1px;height:17px;background:#d4d4d4;"></div>
<div style="position:absolute;left:528px;top:218px;width:1px;height:17px;background:#d4d4d4;"></div>
<div style="position:absolute;left:605px;top:218px;width:1px;height:17px;background:#d4d4d4;"></div>
<div class="t" style="top:222.38px;font-size:8.2px;line-height:12px;color:#1a1a1a;left:301.5px;">Arizona</div>
<div class="t" style="top:222.38px;font-size:8.2px;line-height:12px;color:#1a1a1a;right:249.5px;">$6.11M</div>
<div class="t" style="top:222.38px;font-size:8.2px;line-height:12px;color:#1a1a1a;right:172.5px;">3.52K</div>
<div class="t" style="top:222.38px;font-size:8.2px;line-height:12px;color:#1a1a1a;right:95.5px;">$6.11M</div>
<div class="t" style="top:222.38px;font-size:8.2px;line-height:12px;color:#1a1a1a;right:18px;">3.52K</div>
<div style="position:absolute;left:297px;top:235px;width:76px;height:1px;background:#fbfbfb;"></div>
<div style="position:absolute;left:297px;top:249px;width:76px;height:1px;background:#bdbdbd;"></div>
<div style="position:absolute;left:374px;top:249px;width:309px;height:1px;background:#d4d4d4;"></div>
<div style="position:absolute;left:451px;top:234px;width:1px;height:16px;background:#d4d4d4;"></div>
<div style="position:absolute;left:528px;top:234px;width:1px;height:16px;background:#d4d4d4;"></div>
<div style="position:absolute;left:605px;top:234px;width:1px;height:16px;background:#d4d4d4;"></div>
<div class="t" style="top:237.80px;font-size:8.2px;line-height:12px;color:#1a1a1a;font-weight:bold;left:301.5px;letter-spacing:0.3px;">California</div>
<svg style="position:absolute;left:359px;top:237px" width="12" height="12" viewBox="0 0 12 12"><path d="M5.7 0.2L7.4 3.9H11.5L8.3 6.5L9.5 10.8L5.7 8.3L1.9 10.8L3.1 6.5L-0.1 3.9H4Z" fill="#555" stroke="#555" stroke-width="0.5" stroke-linejoin="round"/></svg>
<div class="t" style="top:237.80px;font-size:8.2px;line-height:12px;color:#1a1a1a;right:249.5px;">$18.9M</div>
<div class="t" style="top:237.80px;font-size:8.2px;line-height:12px;color:#1a1a1a;right:172.5px;">12K</div>
<div class="t" style="top:237.80px;font-size:8.2px;line-height:12px;color:#1a1a1a;right:95.5px;">$18.9M</div>
<div class="t" style="top:237.80px;font-size:8.2px;line-height:12px;color:#1a1a1a;right:18px;">12K</div>
<div style="position:absolute;left:297px;top:250px;width:76px;height:1px;background:#fbfbfb;"></div>
<div style="position:absolute;left:297px;top:265px;width:76px;height:1px;background:#bdbdbd;"></div>
<div style="position:absolute;left:374px;top:265px;width:309px;height:1px;background:#d4d4d4;"></div>
<div style="position:absolute;left:451px;top:249px;width:1px;height:17px;background:#d4d4d4;"></div>
<div style="position:absolute;left:528px;top:249px;width:1px;height:17px;background:#d4d4d4;"></div>
<div style="position:absolute;left:605px;top:249px;width:1px;height:17px;background:#d4d4d4;"></div>
<div class="t" style="top:253.22px;font-size:8.2px;line-height:12px;color:#1a1a1a;left:301.5px;">Colorado</div>
<div class="t" style="top:253.22px;font-size:8.2px;line-height:12px;color:#1a1a1a;right:249.5px;">$6.14M</div>
<div class="t" style="top:253.22px;font-size:8.2px;line-height:12px;color:#1a1a1a;right:172.5px;">3.68K</div>
<div class="t" style="top:253.22px;font-size:8.2px;line-height:12px;color:#1a1a1a;right:95.5px;">$6.14M</div>
<div class="t" style="top:253.22px;font-size:8.2px;line-height:12px;color:#1a1a1a;right:18px;">3.68K</div>
<div style="position:absolute;left:297px;top:266px;width:76px;height:1px;background:#fbfbfb;"></div>
<div style="position:absolute;left:297px;top:280px;width:76px;height:1px;background:#bdbdbd;"></div>
<div style="position:absolute;left:374px;top:280px;width:309px;height:1px;background:#d4d4d4;"></div>
<div style="position:absolute;left:451px;top:265px;width:1px;height:16px;background:#d4d4d4;"></div>
<div style="position:absolute;left:528px;top:265px;width:1px;height:16px;background:#d4d4d4;"></div>
<div style="position:absolute;left:605px;top:265px;width:1px;height:16px;background:#d4d4d4;"></div>
<div class="t" style="top:268.64px;font-size:8.2px;line-height:12px;color:#1a1a1a;left:301.5px;">Connecticut</div>
<div class="t" style="top:268.64px;font-size:8.2px;line-height:12px;color:#1a1a1a;right:249.5px;">$6.07M</div>
<div class="t" style="top:268.64px;font-size:8.2px;line-height:12px;color:#1a1a1a;right:172.5px;">3.65K</div>
<div class="t" style="top:268.64px;font-size:8.2px;line-height:12px;color:#1a1a1a;right:95.5px;">$6.07M</div>
<div class="t" style="top:268.64px;font-size:8.2px;line-height:12px;color:#1a1a1a;right:18px;">3.65K</div>
<div style="position:absolute;left:297px;top:281px;width:76px;height:1px;background:#fbfbfb;"></div>
<div style="position:absolute;left:297px;top:296px;width:76px;height:1px;background:#bdbdbd;"></div>
<div style="position:absolute;left:374px;top:296px;width:309px;height:1px;background:#d4d4d4;"></div>
<div style="position:absolute;left:451px;top:280px;width:1px;height:17px;background:#d4d4d4;"></div>
<div style="position:absolute;left:528px;top:280px;width:1px;height:17px;background:#d4d4d4;"></div>
<div style="position:absolute;left:605px;top:280px;width:1px;height:17px;background:#d4d4d4;"></div>
<div class="t" style="top:284.06px;font-size:8.2px;line-height:12px;color:#1a1a1a;font-weight:bold;left:301.5px;letter-spacing:0.3px;">Florida</div>
<svg style="position:absolute;left:359px;top:283px" width="12" height="12" viewBox="0 0 12 12"><path d="M5.7 0.2L7.4 3.9H11.5L8.3 6.5L9.5 10.8L5.7 8.3L1.9 10.8L3.1 6.5L-0.1 3.9H4Z" fill="#555" stroke="#555" stroke-width="0.5" stroke-linejoin="round"/></svg>
<div class="t" style="top:284.06px;font-size:8.2px;line-height:12px;color:#1a1a1a;right:249.5px;">$6.86M</div>
<div class="t" style="top:284.06px;font-size:8.2px;line-height:12px;color:#1a1a1a;right:172.5px;">4.4K</div>
<div class="t" style="top:284.06px;font-size:8.2px;line-height:12px;color:#1a1a1a;right:95.5px;">$6.86M</div>
<div class="t" style="top:284.06px;font-size:8.2px;line-height:12px;color:#1a1a1a;right:18px;">4.4K</div>
<div style="position:absolute;left:297px;top:297px;width:76px;height:1px;background:#fbfbfb;"></div>
<div style="position:absolute;left:297px;top:311px;width:76px;height:1px;background:#bdbdbd;"></div>
<div style="position:absolute;left:374px;top:311px;width:309px;height:1px;background:#d4d4d4;"></div>
<div style="position:absolute;left:451px;top:296px;width:1px;height:16px;background:#d4d4d4;"></div>
<div style="position:absolute;left:528px;top:296px;width:1px;height:16px;background:#d4d4d4;"></div>
<div style="position:absolute;left:605px;top:296px;width:1px;height:16px;background:#d4d4d4;"></div>
<div class="t" style="top:299.48px;font-size:8.2px;line-height:12px;color:#1a1a1a;left:301.5px;">Georgia</div>
<div class="t" style="top:299.48px;font-size:8.2px;line-height:12px;color:#1a1a1a;right:249.5px;">$6M</div>
<div class="t" style="top:299.48px;font-size:8.2px;line-height:12px;color:#1a1a1a;right:172.5px;">3.56K</div>
<div class="t" style="top:299.48px;font-size:8.2px;line-height:12px;color:#1a1a1a;right:95.5px;">$6M</div>
<div class="t" style="top:299.48px;font-size:8.2px;line-height:12px;color:#1a1a1a;right:18px;">3.56K</div>
<div style="position:absolute;left:297px;top:312px;width:76px;height:1px;background:#fbfbfb;"></div>
<div style="position:absolute;left:297px;top:327px;width:76px;height:1px;background:#bdbdbd;"></div>
<div style="position:absolute;left:374px;top:327px;width:309px;height:1px;background:#d4d4d4;"></div>
<div style="position:absolute;left:451px;top:311px;width:1px;height:17px;background:#d4d4d4;"></div>
<div style="position:absolute;left:528px;top:311px;width:1px;height:17px;background:#d4d4d4;"></div>
<div style="position:absolute;left:605px;top:311px;width:1px;height:17px;background:#d4d4d4;"></div>
<div class="t" style="top:314.90px;font-size:8.2px;line-height:12px;color:#1a1a1a;left:301.5px;">Idaho</div>
<div class="t" style="top:314.90px;font-size:8.2px;line-height:12px;color:#1a1a1a;right:249.5px;">$6.05M</div>
<div class="t" style="top:314.90px;font-size:8.2px;line-height:12px;color:#1a1a1a;right:172.5px;">3.61K</div>
<div class="t" style="top:314.90px;font-size:8.2px;line-height:12px;color:#1a1a1a;right:95.5px;">$6.05M</div>
<div class="t" style="top:314.90px;font-size:8.2px;line-height:12px;color:#1a1a1a;right:18px;">3.61K</div>
<div style="position:absolute;left:297px;top:328px;width:76px;height:1px;background:#fbfbfb;"></div>
<div style="position:absolute;left:297px;top:342px;width:76px;height:1px;background:#bdbdbd;"></div>
<div style="position:absolute;left:374px;top:342px;width:309px;height:1px;background:#d4d4d4;"></div>
<div style="position:absolute;left:451px;top:327px;width:1px;height:16px;background:#d4d4d4;"></div>
<div style="position:absolute;left:528px;top:327px;width:1px;height:16px;background:#d4d4d4;"></div>
<div style="position:absolute;left:605px;top:327px;width:1px;height:16px;background:#d4d4d4;"></div>
<div class="t" style="top:330.32px;font-size:8.2px;line-height:12px;color:#1a1a1a;left:301.5px;">Illinois</div>
<div class="t" style="top:330.32px;font-size:8.2px;line-height:12px;color:#1a1a1a;right:249.5px;">$5.77M</div>
<div class="t" style="top:330.32px;font-size:8.2px;line-height:12px;color:#1a1a1a;right:172.5px;">3.52K</div>
<div class="t" style="top:330.32px;font-size:8.2px;line-height:12px;color:#1a1a1a;right:95.5px;">$5.77M</div>
<div class="t" style="top:330.32px;font-size:8.2px;line-height:12px;color:#1a1a1a;right:18px;">3.52K</div>
<div style="position:absolute;left:297px;top:343px;width:76px;height:1px;background:#fbfbfb;"></div>
<div style="position:absolute;left:297px;top:358px;width:76px;height:1px;background:#bdbdbd;"></div>
<div style="position:absolute;left:374px;top:358px;width:309px;height:1px;background:#d4d4d4;"></div>
<div style="position:absolute;left:451px;top:342px;width:1px;height:17px;background:#d4d4d4;"></div>
<div style="position:absolute;left:528px;top:342px;width:1px;height:17px;background:#d4d4d4;"></div>
<div style="position:absolute;left:605px;top:342px;width:1px;height:17px;background:#d4d4d4;"></div>
<div class="t" style="top:345.74px;font-size:8.2px;line-height:12px;color:#1a1a1a;left:301.5px;">Indiana</div>
<div class="t" style="top:345.74px;font-size:8.2px;line-height:12px;color:#1a1a1a;right:249.5px;">$5.91M</div>
<div class="t" style="top:345.74px;font-size:8.2px;line-height:12px;color:#1a1a1a;right:172.5px;">3.48K</div>
<div class="t" style="top:345.74px;font-size:8.2px;line-height:12px;color:#1a1a1a;right:95.5px;">$5.91M</div>
<div class="t" style="top:345.74px;font-size:8.2px;line-height:12px;color:#1a1a1a;right:18px;">3.48K</div>
<div style="position:absolute;left:297px;top:359px;width:76px;height:1px;background:#fbfbfb;"></div>
<div style="position:absolute;left:297px;top:373px;width:76px;height:1px;background:#bdbdbd;"></div>
<div style="position:absolute;left:374px;top:373px;width:309px;height:1px;background:#d4d4d4;"></div>
<div style="position:absolute;left:451px;top:358px;width:1px;height:16px;background:#d4d4d4;"></div>
<div style="position:absolute;left:528px;top:358px;width:1px;height:16px;background:#d4d4d4;"></div>
<div style="position:absolute;left:605px;top:358px;width:1px;height:16px;background:#d4d4d4;"></div>
<div class="t" style="top:361.16px;font-size:8.2px;line-height:12px;color:#1a1a1a;left:301.5px;">Kentucky</div>
<div class="t" style="top:361.16px;font-size:8.2px;line-height:12px;color:#1a1a1a;right:249.5px;">$6.12M</div>
<div class="t" style="top:361.16px;font-size:8.2px;line-height:12px;color:#1a1a1a;right:172.5px;">3.64K</div>
<div class="t" style="top:361.16px;font-size:8.2px;line-height:12px;color:#1a1a1a;right:95.5px;">$6.12M</div>
<div class="t" style="top:361.16px;font-size:8.2px;line-height:12px;color:#1a1a1a;right:18px;">3.64K</div>
<div style="position:absolute;left:297px;top:374px;width:76px;height:1px;background:#fbfbfb;"></div>
<div style="position:absolute;left:297px;top:389px;width:76px;height:1px;background:#bdbdbd;"></div>
<div style="position:absolute;left:374px;top:389px;width:309px;height:1px;background:#d4d4d4;"></div>
<div style="position:absolute;left:451px;top:373px;width:1px;height:17px;background:#d4d4d4;"></div>
<div style="position:absolute;left:528px;top:373px;width:1px;height:17px;background:#d4d4d4;"></div>
<div style="position:absolute;left:605px;top:373px;width:1px;height:17px;background:#d4d4d4;"></div>
<div class="t" style="top:376.58px;font-size:8.2px;line-height:12px;color:#1a1a1a;left:301.5px;">Maine</div>
<div class="t" style="top:376.58px;font-size:8.2px;line-height:12px;color:#1a1a1a;right:249.5px;">$5.89M</div>
<div class="t" style="top:376.58px;font-size:8.2px;line-height:12px;color:#1a1a1a;right:172.5px;">3.47K</div>
<div class="t" style="top:376.58px;font-size:8.2px;line-height:12px;color:#1a1a1a;right:95.5px;">$5.89M</div>
<div class="t" style="top:376.58px;font-size:8.2px;line-height:12px;color:#1a1a1a;right:18px;">3.47K</div>
<div style="position:absolute;left:297px;top:390px;width:76px;height:1px;background:#fbfbfb;"></div>
<div style="position:absolute;left:297px;top:404px;width:76px;height:1px;background:#bdbdbd;"></div>
<div style="position:absolute;left:374px;top:404px;width:309px;height:1px;background:#d4d4d4;"></div>
<div style="position:absolute;left:451px;top:389px;width:1px;height:16px;background:#d4d4d4;"></div>
<div style="position:absolute;left:528px;top:389px;width:1px;height:16px;background:#d4d4d4;"></div>
<div style="position:absolute;left:605px;top:389px;width:1px;height:16px;background:#d4d4d4;"></div>
<div class="t" style="top:392.00px;font-size:8.2px;line-height:12px;color:#1a1a1a;left:301.5px;">Massachusetts</div>
<div class="t" style="top:392.00px;font-size:8.2px;line-height:12px;color:#1a1a1a;right:249.5px;">$5.81M</div>
<div class="t" style="top:392.00px;font-size:8.2px;line-height:12px;color:#1a1a1a;right:172.5px;">3.55K</div>
<div class="t" style="top:392.00px;font-size:8.2px;line-height:12px;color:#1a1a1a;right:95.5px;">$5.81M</div>
<div class="t" style="top:392.00px;font-size:8.2px;line-height:12px;color:#1a1a1a;right:18px;">3.55K</div>
<div style="position:absolute;left:297px;top:405px;width:76px;height:1px;background:#fbfbfb;"></div>
<div style="position:absolute;left:297px;top:420px;width:76px;height:1px;background:#bdbdbd;"></div>
<div style="position:absolute;left:374px;top:420px;width:309px;height:1px;background:#d4d4d4;"></div>
<div style="position:absolute;left:451px;top:404px;width:1px;height:17px;background:#d4d4d4;"></div>
<div style="position:absolute;left:528px;top:404px;width:1px;height:17px;background:#d4d4d4;"></div>
<div style="position:absolute;left:605px;top:404px;width:1px;height:17px;background:#d4d4d4;"></div>
<div class="t" style="top:407.42px;font-size:8.2px;line-height:12px;color:#1a1a1a;left:301.5px;">Michigan</div>
<div class="t" style="top:407.42px;font-size:8.2px;line-height:12px;color:#1a1a1a;right:249.5px;">$5.94M</div>
<div class="t" style="top:407.42px;font-size:8.2px;line-height:12px;color:#1a1a1a;right:172.5px;">3.52K</div>
<div class="t" style="top:407.42px;font-size:8.2px;line-height:12px;color:#1a1a1a;right:95.5px;">$5.94M</div>
<div class="t" style="top:407.42px;font-size:8.2px;line-height:12px;color:#1a1a1a;right:18px;">3.52K</div>
<div style="position:absolute;left:297px;top:421px;width:76px;height:1px;background:#fbfbfb;"></div>
<div style="position:absolute;left:297px;top:435px;width:76px;height:1px;background:#bdbdbd;"></div>
<div style="position:absolute;left:374px;top:435px;width:309px;height:1px;background:#d4d4d4;"></div>
<div style="position:absolute;left:451px;top:420px;width:1px;height:16px;background:#d4d4d4;"></div>
<div style="position:absolute;left:528px;top:420px;width:1px;height:16px;background:#d4d4d4;"></div>
<div style="position:absolute;left:605px;top:420px;width:1px;height:16px;background:#d4d4d4;"></div>
<div class="t" style="top:422.84px;font-size:8.2px;line-height:12px;color:#1a1a1a;left:301.5px;">Minnesota</div>
<div class="t" style="top:422.84px;font-size:8.2px;line-height:12px;color:#1a1a1a;right:249.5px;">$6.1M</div>
<div class="t" style="top:422.84px;font-size:8.2px;line-height:12px;color:#1a1a1a;right:172.5px;">3.6K</div>
<div class="t" style="top:422.84px;font-size:8.2px;line-height:12px;color:#1a1a1a;right:95.5px;">$6.1M</div>
<div class="t" style="top:422.84px;font-size:8.2px;line-height:12px;color:#1a1a1a;right:18px;">3.6K</div>
<div style="position:absolute;left:297px;top:436px;width:76px;height:1px;background:#fbfbfb;"></div>
<div style="position:absolute;left:297px;top:451px;width:76px;height:1px;background:#bdbdbd;"></div>
<div style="position:absolute;left:374px;top:451px;width:309px;height:1px;background:#d4d4d4;"></div>
<div style="position:absolute;left:451px;top:435px;width:1px;height:17px;background:#d4d4d4;"></div>
<div style="position:absolute;left:528px;top:435px;width:1px;height:17px;background:#d4d4d4;"></div>
<div style="position:absolute;left:605px;top:435px;width:1px;height:17px;background:#d4d4d4;"></div>
<div class="t" style="top:438.26px;font-size:8.2px;line-height:12px;color:#1a1a1a;font-weight:bold;left:301.5px;letter-spacing:0.3px;">Mississippi</div>
<svg style="position:absolute;left:359px;top:437px" width="12" height="12" viewBox="0 0 12 12"><path d="M5.7 0.2L7.4 3.9H11.5L8.3 6.5L9.5 10.8L5.7 8.3L1.9 10.8L3.1 6.5L-0.1 3.9H4Z" fill="#555" stroke="#555" stroke-width="0.5" stroke-linejoin="round"/></svg>
<div class="t" style="top:438.26px;font-size:8.2px;line-height:12px;color:#1a1a1a;right:249.5px;">$6.48M</div>
<div class="t" style="top:438.26px;font-size:8.2px;line-height:12px;color:#1a1a1a;right:172.5px;">3.78K</div>
<div class="t" style="top:438.26px;font-size:8.2px;line-height:12px;color:#1a1a1a;right:95.5px;">$6.48M</div>
<div class="t" style="top:438.26px;font-size:8.2px;line-height:12px;color:#1a1a1a;right:18px;">3.78K</div>
<div style="position:absolute;left:297px;top:452px;width:76px;height:1px;background:#fbfbfb;"></div>
<div style="position:absolute;left:297px;top:466px;width:76px;height:1px;background:#bdbdbd;"></div>
<div style="position:absolute;left:374px;top:466px;width:309px;height:1px;background:#d4d4d4;"></div>
<div style="position:absolute;left:451px;top:451px;width:1px;height:16px;background:#d4d4d4;"></div>
<div style="position:absolute;left:528px;top:451px;width:1px;height:16px;background:#d4d4d4;"></div>
<div style="position:absolute;left:605px;top:451px;width:1px;height:16px;background:#d4d4d4;"></div>
<div class="t" style="top:453.68px;font-size:8.2px;line-height:12px;color:#1a1a1a;left:301.5px;">Missouri</div>
<div class="t" style="top:453.68px;font-size:8.2px;line-height:12px;color:#1a1a1a;right:249.5px;">$6.26M</div>
<div class="t" style="top:453.68px;font-size:8.2px;line-height:12px;color:#1a1a1a;right:172.5px;">3.67K</div>
<div class="t" style="top:453.68px;font-size:8.2px;line-height:12px;color:#1a1a1a;right:95.5px;">$6.26M</div>
<div class="t" style="top:453.68px;font-size:8.2px;line-height:12px;color:#1a1a1a;right:18px;">3.67K</div>
<div style="position:absolute;left:297px;top:467px;width:76px;height:1px;background:#fbfbfb;"></div>
<div style="position:absolute;left:297px;top:481px;width:76px;height:1px;background:#bdbdbd;"></div>
<div style="position:absolute;left:374px;top:481px;width:309px;height:1px;background:#d4d4d4;"></div>
<div style="position:absolute;left:451px;top:466px;width:1px;height:16px;background:#d4d4d4;"></div>
<div style="position:absolute;left:528px;top:466px;width:1px;height:16px;background:#d4d4d4;"></div>
<div style="position:absolute;left:605px;top:466px;width:1px;height:16px;background:#d4d4d4;"></div>
<div class="t" style="top:469.10px;font-size:8.2px;line-height:12px;color:#1a1a1a;left:301.5px;">Montana</div>
<div class="t" style="top:469.10px;font-size:8.2px;line-height:12px;color:#1a1a1a;right:249.5px;">$5.86M</div>
<div class="t" style="top:469.10px;font-size:8.2px;line-height:12px;color:#1a1a1a;right:172.5px;">3.47K</div>
<div class="t" style="top:469.10px;font-size:8.2px;line-height:12px;color:#1a1a1a;right:95.5px;">$5.86M</div>
<div class="t" style="top:469.10px;font-size:8.2px;line-height:12px;color:#1a1a1a;right:18px;">3.47K</div>
<div style="position:absolute;left:297px;top:482px;width:76px;height:1px;background:#fbfbfb;"></div>
<div style="position:absolute;left:297px;top:497px;width:76px;height:1px;background:#bdbdbd;"></div>
<div style="position:absolute;left:374px;top:497px;width:309px;height:1px;background:#d4d4d4;"></div>
<div style="position:absolute;left:451px;top:481px;width:1px;height:17px;background:#d4d4d4;"></div>
<div style="position:absolute;left:528px;top:481px;width:1px;height:17px;background:#d4d4d4;"></div>
<div style="position:absolute;left:605px;top:481px;width:1px;height:17px;background:#d4d4d4;"></div>
<div class="t" style="top:484.52px;font-size:8.2px;line-height:12px;color:#1a1a1a;left:301.5px;">Nevada</div>
<div class="t" style="top:484.52px;font-size:8.2px;line-height:12px;color:#1a1a1a;right:249.5px;">$6.14M</div>
<div class="t" style="top:484.52px;font-size:8.2px;line-height:12px;color:#1a1a1a;right:172.5px;">3.61K</div>
<div class="t" style="top:484.52px;font-size:8.2px;line-height:12px;color:#1a1a1a;right:95.5px;">$6.14M</div>
<div class="t" style="top:484.52px;font-size:8.2px;line-height:12px;color:#1a1a1a;right:18px;">3.61K</div>
<div style="position:absolute;left:297px;top:498px;width:76px;height:1px;background:#fbfbfb;"></div>
<div style="position:absolute;left:297px;top:512px;width:76px;height:1px;background:#bdbdbd;"></div>
<div style="position:absolute;left:374px;top:512px;width:309px;height:1px;background:#d4d4d4;"></div>
<div style="position:absolute;left:451px;top:497px;width:1px;height:16px;background:#d4d4d4;"></div>
<div style="position:absolute;left:528px;top:497px;width:1px;height:16px;background:#d4d4d4;"></div>
<div style="position:absolute;left:605px;top:497px;width:1px;height:16px;background:#d4d4d4;"></div>
<div class="t" style="top:499.94px;font-size:8.2px;line-height:12px;color:#1a1a1a;left:301.5px;">New Hampshire</div>
<div class="t" style="top:499.94px;font-size:8.2px;line-height:12px;color:#1a1a1a;right:249.5px;">$6.02M</div>
<div class="t" style="top:499.94px;font-size:8.2px;line-height:12px;color:#1a1a1a;right:172.5px;">3.54K</div>
<div class="t" style="top:499.94px;font-size:8.2px;line-height:12px;color:#1a1a1a;right:95.5px;">$6.02M</div>
<div class="t" style="top:499.94px;font-size:8.2px;line-height:12px;color:#1a1a1a;right:18px;">3.54K</div>
<div style="position:absolute;left:297px;top:513px;width:76px;height:1px;background:#fbfbfb;"></div>
<div style="position:absolute;left:297px;top:528px;width:76px;height:1px;background:#bdbdbd;"></div>
<div style="position:absolute;left:374px;top:528px;width:309px;height:1px;background:#d4d4d4;"></div>
<div style="position:absolute;left:451px;top:512px;width:1px;height:17px;background:#d4d4d4;"></div>
<div style="position:absolute;left:528px;top:512px;width:1px;height:17px;background:#d4d4d4;"></div>
<div style="position:absolute;left:605px;top:512px;width:1px;height:17px;background:#d4d4d4;"></div>
<div class="t" style="top:515.36px;font-size:8.2px;line-height:12px;color:#1a1a1a;left:301.5px;">New Mexico</div>
<div class="t" style="top:515.36px;font-size:8.2px;line-height:12px;color:#1a1a1a;right:249.5px;">$6.16M</div>
<div class="t" style="top:515.36px;font-size:8.2px;line-height:12px;color:#1a1a1a;right:172.5px;">3.6K</div>
<div class="t" style="top:515.36px;font-size:8.2px;line-height:12px;color:#1a1a1a;right:95.5px;">$6.16M</div>
<div class="t" style="top:515.36px;font-size:8.2px;line-height:12px;color:#1a1a1a;right:18px;">3.6K</div>
<div style="position:absolute;left:297px;top:529px;width:76px;height:1px;background:#fbfbfb;"></div>
<div style="position:absolute;left:297px;top:543px;width:76px;height:1px;background:#bdbdbd;"></div>
<div style="position:absolute;left:374px;top:543px;width:309px;height:1px;background:#d4d4d4;"></div>
<div style="position:absolute;left:451px;top:528px;width:1px;height:16px;background:#d4d4d4;"></div>
<div style="position:absolute;left:528px;top:528px;width:1px;height:16px;background:#d4d4d4;"></div>
<div style="position:absolute;left:605px;top:528px;width:1px;height:16px;background:#d4d4d4;"></div>
<div class="t" style="top:530.78px;font-size:8.2px;line-height:12px;color:#1a1a1a;left:301.5px;">New York</div>
<div class="t" style="top:530.78px;font-size:8.2px;line-height:12px;color:#1a1a1a;right:249.5px;">$5.86M</div>
<div class="t" style="top:530.78px;font-size:8.2px;line-height:12px;color:#1a1a1a;right:172.5px;">3.54K</div>
<div class="t" style="top:530.78px;font-size:8.2px;line-height:12px;color:#1a1a1a;right:95.5px;">$5.86M</div>
<div class="t" style="top:530.78px;font-size:8.2px;line-height:12px;color:#1a1a1a;right:18px;">3.54K</div>
<div style="position:absolute;left:297px;top:544px;width:76px;height:1px;background:#fbfbfb;"></div>
<div style="position:absolute;left:451px;top:543px;width:1px;height:15px;background:#d4d4d4;"></div>
<div style="position:absolute;left:528px;top:543px;width:1px;height:15px;background:#d4d4d4;"></div>
<div style="position:absolute;left:605px;top:543px;width:1px;height:15px;background:#d4d4d4;"></div>
<div class="t" style="top:546.20px;font-size:8.2px;line-height:12px;color:#1a1a1a;left:301.5px;">Grand Total</div>
<div class="t" style="top:546.20px;font-size:8.2px;line-height:12px;color:#1a1a1a;right:249.5px;">$147M</div>
<div class="t" style="top:546.20px;font-size:8.2px;line-height:12px;color:#1a1a1a;right:172.5px;">88.1K</div>
<div class="t" style="top:546.20px;font-size:8.2px;line-height:12px;color:#1a1a1a;right:95.5px;">$147M</div>
<div class="t" style="top:546.20px;font-size:8.2px;line-height:12px;color:#1a1a1a;right:18px;">88.1K</div>
<div style="position:absolute;left:373px;top:203px;width:1px;height:355px;background:#bcbcbc;"></div>
<div style="position:absolute;left:297px;top:203px;width:386px;height:1px;background:#bcbcbc;"></div>
<div style="position:absolute;left:374px;top:204px;width:77px;height:15px;border:1px dotted #333;box-sizing:border-box;"></div>
<div style="position:absolute;left:249px;top:99px;width:103px;height:41px;background:#fff;border:1px solid #c6c6c6;box-sizing:border-box;box-shadow:1px 1px 2px rgba(0,0,0,0.12);"></div>
<svg style="position:absolute;left:256.5px;top:107px" width="9" height="7" viewBox="0 0 9 7"><path d="M0.8 3.5L3.2 6L8.2 0.8" fill="none" stroke="#333" stroke-width="1.2"/></svg>
<div class="t" style="top:105.33px;font-size:9.45px;line-height:12px;color:#222;left:276.2px;">Compact</div>
<div class="t" style="top:122.73px;font-size:9.45px;line-height:12px;color:#222;left:276.5px;">Tabular</div>
</body></html>
